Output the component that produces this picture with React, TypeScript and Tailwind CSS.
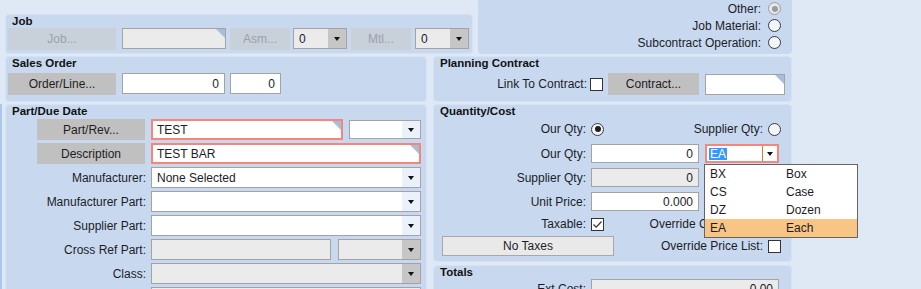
import type { ReactNode } from "react";

const panel = "rounded-[4px] border border-[#d5e2f3] bg-[#c8d9ef]";
const title = "pl-[6px] text-[11.5px] font-bold leading-[13px] text-[#111]";

function Arrow() {
  return <span className="block h-0 w-0 border-x-[3px] border-t-[4px] border-x-transparent border-t-[#111]" />;
}

function Corner() {
  return <span className="absolute right-0 top-0 h-0 w-0 border-l-[9px] border-t-[9px] border-l-transparent border-t-[#a7bedb]" />;
}

function Btn({ className, label, disabled }: { className: string; label: string; disabled?: boolean }) {
  return (
    <div
      className={`flex shrink-0 items-center justify-center ${disabled ? "bg-[#c8d0da] text-[#9aa2ad]" : "bg-[#c0c0c0] text-[#1e1e1e]"} ${className}`}
    >
      {label}
    </div>
  );
}

function Field({
  className,
  value = "",
  right,
  disabled,
  error,
  corner,
}: {
  className: string;
  value?: string;
  right?: boolean;
  disabled?: boolean;
  error?: boolean;
  corner?: boolean;
}) {
  return (
    <div
      className={`relative flex shrink-0 items-center overflow-hidden ${error ? "border-2 border-[#f7857a] pl-[4px]" : "border border-[#a3a3a3] pl-[5px]"} ${disabled ? "bg-[#ebebeb]" : "bg-white"} ${right ? "justify-end pr-[5px]" : ""} ${className}`}
    >
      <span>{value}</span>
      {corner ? <Corner /> : null}
    </div>
  );
}

function Combo({
  className,
  value = "",
  disabled,
  btn = "bg-[#eaf1fb]",
}: {
  className: string;
  value?: string;
  disabled?: boolean;
  btn?: string;
}) {
  return (
    <div className={`flex shrink-0 overflow-hidden border border-[#a3a3a3] ${disabled ? "bg-[#ebebeb]" : "bg-white"} ${className}`}>
      <span className="flex flex-1 items-center pl-[5px]">{value}</span>
      <span className={`flex w-[18px] items-center justify-center ${btn}`}>
        <Arrow />
      </span>
    </div>
  );
}

function Radio({ checked, disabled }: { checked?: boolean; disabled?: boolean }) {
  return (
    <span
      className={`flex h-[13px] w-[13px] shrink-0 items-center justify-center rounded-full border ${disabled ? "border-[#9c9c9c] bg-[#e4e7ec]" : "border-[#3a3a3a] bg-[#f2f5fa]"}`}
    >
      {checked ? <span className={`h-[6px] w-[6px] rounded-full ${disabled ? "bg-[#9c9c9c]" : "bg-[#1e1e1e]"}`} /> : null}
    </span>
  );
}

function Check({ checked }: { checked?: boolean }) {
  return (
    <span className="flex h-[13px] w-[13px] shrink-0 items-center justify-center border border-[#333] bg-white">
      {checked ? (
        <svg width="11" height="11" viewBox="0 0 11 11">
          <path d="M1.5 5.5 L4.2 8.2 L9.5 2.5" stroke="#333" strokeWidth="1.2" fill="none" />
        </svg>
      ) : null}
    </span>
  );
}

function Row({ label, children, w = "w-[140px]" }: { label: ReactNode; children: ReactNode; w?: string }) {
  return (
    <div className="flex h-[21px] items-center">
      <div className={`flex shrink-0 justify-end ${w}`}>{label}</div>
      <div className="ml-[5px] flex h-full items-stretch">{children}</div>
    </div>
  );
}

function JobPanel() {
  return (
    <div className={`h-[40px] w-[468px] ${panel}`}>
      <div className={`h-[13px] ${title}`}>Job</div>
      <div className="flex items-start pl-[2px]">
        <Btn className="h-[22px] w-[108px]" label="Job..." disabled />
        <Field className="ml-[6px] h-[21px] w-[104px]" disabled corner />
        <Btn className="ml-[4px] h-[22px] w-[60px]" label="Asm..." disabled />
        <Combo className="ml-[3px] h-[21px] w-[54px]" value="0" disabled btn="bg-[#c6c6c6]" />
        <Btn className="ml-[4px] h-[22px] w-[60px]" label="Mtl..." disabled />
        <Combo className="ml-[4px] h-[21px] w-[54px]" value="0" disabled btn="bg-[#c6c6c6]" />
      </div>
    </div>
  );
}

function SourcePanel() {
  const rows = [
    { label: "Other:", checked: true, disabled: true },
    { label: "Job Material:" },
    { label: "Subcontract Operation:" },
  ];
  return (
    <div className="flex h-[54px] w-[314px] flex-col items-end rounded-b-[4px] bg-[#c8d9ef] pr-[11px]">
      {rows.map((r) => (
        <div key={r.label} className="flex h-[17px] items-center gap-[7px]">
          <span>{r.label}</span>
          <Radio checked={r.checked} disabled={r.disabled} />
        </div>
      ))}
    </div>
  );
}

export default function App() {
  return (
    <div className="relative h-[289px] w-[921px] overflow-hidden bg-[#dfe8f5] font-['Liberation_Sans',Arial,sans-serif] text-[12px] leading-[14px] text-[#1c1c28]">
      <div className="flex h-[54px]">
        <div className="w-[478px] pl-[5px] pt-[14px]">
          <JobPanel />
        </div>
        <SourcePanel />
      </div>

      <div className="mt-[2px] flex h-[46px] gap-[6px] pl-[5px]">
        <div className={`w-[422px] ${panel}`}>
          <div className={`h-[16px] ${title}`}>Sales Order</div>
          <div className="flex items-start pl-[2px]">
            <Btn className="h-[22px] w-[108px]" label="Order/Line..." />
            <Field className="ml-[6px] h-[21px] w-[103px]" value="0" right />
            <Field className="ml-[5px] h-[21px] w-[51px]" value="0" right />
          </div>
        </div>
        <div className={`w-[359px] ${panel}`}>
          <div className={`h-[16px] ${title}`}>Planning Contract</div>
          <div className="flex h-[22px] items-center">
            <span className="w-[153px] text-right">Link To Contract:</span>
            <span className="ml-[3px]">
              <Check />
            </span>
            <Btn className="ml-[5px] h-[22px] w-[91px]" label="Contract..." />
            <Field className="ml-[6px] h-[21px] w-[80px]" corner />
          </div>
        </div>
      </div>

      <div className="mt-[2px] flex gap-[6px] border-l-2 border-[#a9c6ec] pl-[3px]">
        <div className={`h-[200px] w-[422px] ${panel}`}>
          <div className={`h-[14px] ${title}`}>Part/Due Date</div>
          <div className="flex flex-col gap-[3px]">
            <Row label={<Btn className="mr-[1px] h-[21px] w-[108px]" label="Part/Rev..." />}>
              <Field className="w-[192px]" value="TEST" error corner />
              <Combo className="my-[1px] ml-[6px] w-[72px]" />
            </Row>
            <Row label={<Btn className="mr-[1px] h-[21px] w-[108px]" label="Description" />}>
              <Field className="w-[270px]" value="TEST BAR" error corner />
            </Row>
            <Row label="Manufacturer:">
              <Combo className="w-[270px]" value="None Selected" />
            </Row>
            <Row label="Manufacturer Part:">
              <Combo className="w-[270px]" />
            </Row>
            <Row label="Supplier Part:">
              <Combo className="w-[270px]" />
            </Row>
            <Row label="Cross Ref Part:">
              <Field className="w-[180px]" disabled />
              <Combo className="ml-[7px] w-[83px]" disabled btn="bg-[#c6c6c6]" />
            </Row>
            <Row label="Class:">
              <Combo className="w-[270px]" disabled btn="bg-[#c6c6c6]" />
            </Row>
            <Row label="">
              <Field className="w-[270px]" disabled />
            </Row>
          </div>
        </div>

        <div className="flex w-[359px] flex-col">
          <div className={`h-[158px] ${panel}`}>
            <div className={`h-[14px] ${title}`}>Quantity/Cost</div>
            <div className="flex h-[20px] items-center pr-[10px]">
              <span className="w-[152px] text-right">Our Qty:</span>
              <span className="ml-[5px]">
                <Radio checked />
              </span>
              <div className="flex flex-1 items-center justify-end gap-[5px]">
                <span>Supplier Qty:</span>
                <Radio />
              </div>
            </div>
            <div className="mt-[5px] flex h-[19px] items-stretch">
              <span className="flex w-[152px] items-center justify-end">Our Qty:</span>
              <Field className="ml-[5px] w-[108px]" value="0" right />
              <div className="ml-[6px] flex w-[74px] border-2 border-[#f7857a] bg-white">
                <span className="flex flex-1 items-center pl-[2px]">
                  <span className="bg-[#3399ff] px-[1px] leading-[12px] text-white">EA</span>
                </span>
                <span className="flex w-[15px] items-center justify-center border-l border-[#e0782c]">
                  <Arrow />
                </span>
              </div>
            </div>
            <div className="mt-[5px] flex h-[19px] items-stretch">
              <span className="flex w-[152px] items-center justify-end">Supplier Qty:</span>
              <Field className="ml-[5px] w-[108px]" value="0" right disabled />
            </div>
            <div className="mt-[5px] flex h-[19px] items-stretch">
              <span className="flex w-[152px] items-center justify-end">Unit Price:</span>
              <Field className="ml-[5px] w-[108px]" value="0.000" right />
            </div>
            <div className="mt-[4px] flex h-[18px] items-center pr-[10px]">
              <span className="w-[152px] text-right">Taxable:</span>
              <span className="ml-[5px]">
                <Check checked />
              </span>
              <div className="flex flex-1 items-center justify-end gap-[5px]">
                <span>Override Conversion:</span>
                <Check />
              </div>
            </div>
            <div className="mt-[3px] flex h-[20px] items-center pl-[8px] pr-[10px]">
              <div className="flex h-[20px] w-[172px] items-center justify-center border border-[#a8a8a8] bg-[#e9e9e9]">
                No Taxes
              </div>
              <div className="flex flex-1 items-center justify-end gap-[5px]">
                <span>Override Price List:</span>
                <Check />
              </div>
            </div>
          </div>

          <div className={`mt-[3px] h-[40px] ${panel}`}>
            <div className={`h-[13px] ${title}`}>Totals</div>
            <div className="flex h-[20px] items-stretch">
              <span className="flex w-[152px] items-center justify-end">Ext Cost:</span>
              <Field className="ml-[5px] w-[188px]" value="0.00" right disabled />
            </div>
          </div>
        </div>
      </div>

      <div className="absolute left-[704px] top-[164px] w-[154px] border border-[#646464] bg-white">
        {[
          ["BX", "Box"],
          ["CS", "Case"],
          ["DZ", "Dozen"],
          ["EA", "Each"],
        ].map(([code, desc]) => (
          <div key={code} className={`flex h-[18px] items-center ${code === "EA" ? "bg-[#f8c585]" : ""}`}>
            <span className="w-[81px] pl-[5px]">{code}</span>
            <span>{desc}</span>
          </div>
        ))}
      </div>
    </div>
  );
}
